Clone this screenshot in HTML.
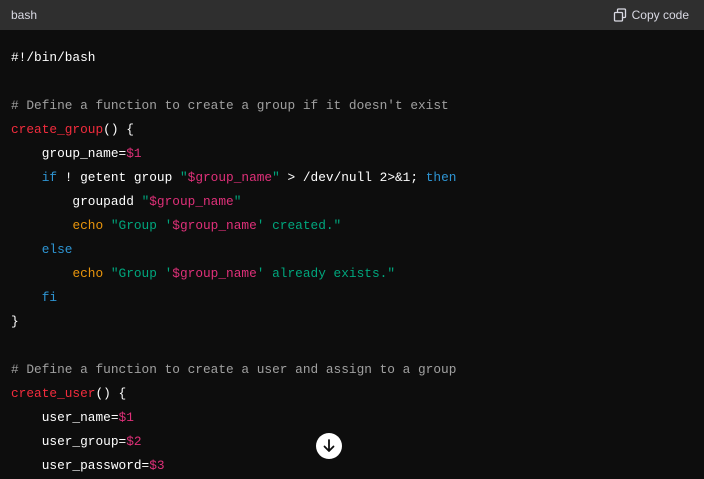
<!DOCTYPE html>
<html><head><style>
body{margin:0;width:704px;height:479px;background:#0d0d0d;overflow:hidden;position:relative;}
.hd{height:30px;background:#2f2f2f;color:#d9d9e3;font:12px "Liberation Sans",sans-serif;display:flex;align-items:center;justify-content:space-between;padding:0 15px 0 11px;}
.cp{display:flex;align-items:center;gap:5px}
pre{margin:0;position:absolute;top:46px;left:11px;font:12.8px/24px "Liberation Mono",monospace;color:#fff;}
.c{color:#a0a0a0}.f{color:#f22c3d}.v{color:#df3079}.k{color:#2e95d3}.s{color:#00a67d}.e{color:#e9950c}
.btn{position:absolute;left:316px;top:433px;width:26px;height:26px;border-radius:50%;background:#fff;}
</style></head><body>
<div class="hd"><span>bash</span><span class="cp"><svg width="14" height="14" viewBox="0 0 14 14" fill="none" stroke="#d9d9e3" stroke-width="1.3"><rect x="1.5" y="4.5" width="8" height="8.5" rx="1"/><path d="M4.5 4.5V2a1 1 0 0 1 1-1h6a1 1 0 0 1 1 1v6.5a1 1 0 0 1-1 1H9.5"/></svg>Copy code</span></div>
<pre>#!/bin/bash

<span class="c"># Define a function to create a group if it doesn't exist</span>
<span class="f">create_group</span>() {
    group_name=<span class="v">$1</span>
    <span class="k">if</span> ! getent group <span class="s">"<span class="v">$group_name</span>"</span> &gt; /dev/null 2&gt;&amp;1; <span class="k">then</span>
        groupadd <span class="s">"<span class="v">$group_name</span>"</span>
        <span class="e">echo</span> <span class="s">"Group '<span class="v">$group_name</span>' created."</span>
    <span class="k">else</span>
        <span class="e">echo</span> <span class="s">"Group '<span class="v">$group_name</span>' already exists."</span>
    <span class="k">fi</span>
}

<span class="c"># Define a function to create a user and assign to a group</span>
<span class="f">create_user</span>() {
    user_name=<span class="v">$1</span>
    user_group=<span class="v">$2</span>
    user_password=<span class="v">$3</span>
</pre>
<div class="btn"><svg width="26" height="26" viewBox="0 0 26 26" fill="none" stroke="#0d0d0d" stroke-width="1.8" stroke-linecap="round" stroke-linejoin="round"><path d="M13 7v11M8.5 13.5L13 18l4.5-4.5"/></svg></div>
</body></html>
